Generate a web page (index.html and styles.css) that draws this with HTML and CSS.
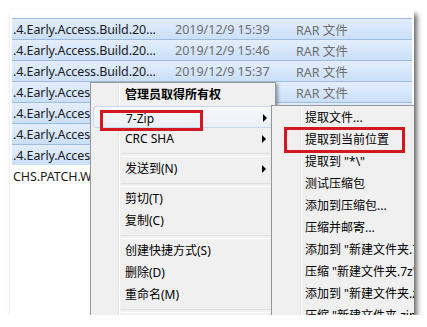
FILE: index.html
```html
<!doctype html>
<html>
<head>
    <meta charset="utf-8" />
    <title>7-Zip context menu</title>
    <link rel="stylesheet" href="styles.css">
</head>
<body>
    <div class="shot">
        <div class="list">
            <div class="row sel"><span class="name">.4.Early.Access.Build.20...</span><span class="date">2019/12/9 15:39</span><span class="type">RAR 文件</span></div>
            <div class="row sel"><span class="name">.4.Early.Access.Build.20...</span><span class="date">2019/12/9 15:46</span><span class="type">RAR 文件</span></div>
            <div class="row sel"><span class="name">.4.Early.Access.Build.20...</span><span class="date">2019/12/9 15:37</span><span class="type">RAR 文件</span></div>
            <div class="row sel"><span class="name">.4.Early.Access.Build.20...</span><span class="date">2019/12/9 15:37</span><span class="type">RAR 文件</span></div>
            <div class="row sel"><span class="name">.4.Early.Access.Build.20...</span><span class="date">2019/12/9 15:37</span><span class="type">RAR 文件</span></div>
            <div class="row sel"><span class="name">.4.Early.Access.Build.20...</span><span class="date">2019/12/9 15:37</span><span class="type">RAR 文件</span></div>
            <div class="row sel"><span class="name">.4.Early.Access.Build.20...</span><span class="date">2019/12/9 15:37</span><span class="type">RAR 文件</span></div>
            <div class="row"><span class="name">CHS.PATCH.WITH.UPDATE</span><span class="date">2019/12/9 15:30</span><span class="type">文件夹</span></div>
        </div>

        <!-- main context menu -->
        <div class="menu main">
            <div class="item bold">管理员取得所有权</div>
            <div class="item hot">7-Zip<span class="arrow"></span></div>
            <div class="item">CRC SHA<span class="arrow"></span></div>
            <div class="sep"></div>
            <div class="item">发送到(N)<span class="arrow"></span></div>
            <div class="sep"></div>
            <div class="item">剪切(T)</div>
            <div class="item">复制(C)</div>
            <div class="sep"></div>
            <div class="item">创建快捷方式(S)</div>
            <div class="item">删除(D)</div>
            <div class="item">重命名(M)</div>
            <div class="sep"></div>
        </div>

        <!-- 7-zip submenu -->
        <div class="menu sub">
            <div class="item">提取文件...</div>
            <div class="item">提取到当前位置</div>
            <div class="item">提取到 "*\"</div>
            <div class="item">测试压缩包</div>
            <div class="item">添加到压缩包...</div>
            <div class="item">压缩并邮寄...</div>
            <div class="item">添加到 "新建文件夹.7z"</div>
            <div class="item">压缩 "新建文件夹.7z" 并邮寄</div>
            <div class="item">添加到 "新建文件夹.zip"</div>
            <div class="item">压缩 "新建文件夹.zip" 并邮寄</div>
        </div>

        <div class="mark mark-zip"></div>
        <div class="mark mark-here"></div>
    </div>
</body>
</html>
```

FILE: styles.css
```css
* {
    margin: 0;
    padding: 0;
    box-sizing: border-box;
}

body {
    background: #ffffff;
    font-family: "Noto Sans", "Noto Sans CJK SC", sans-serif;
}

/* screenshot panel */
.shot {
    position: relative;
    margin: 10px 0 0 10px;
    width: 404px;
    height: 305px;
    background: #ffffff;
    overflow: hidden;
    box-shadow: 3px 4px 5px rgba(0, 0, 0, 0.6);
}

/* file list */
.list {
    padding: 8px 2px 0 2px;
}

.row {
    display: flex;
    align-items: center;
    height: 21px;
    font-size: 12.5px;
    color: #1b1b1b;
    white-space: nowrap;
    border-top: 1px solid transparent;
}

.row.sel {
    background: linear-gradient(#e3eefc, #cadff8);
    border-top: 1px solid #9fbbe0;
}

.row .name {
    width: 163px;
    padding-left: 1px;
    overflow: hidden;
    letter-spacing: -0.1px;
}

.row .date {
    width: 121px;
    color: #6e6e6e;
}

.row .type {
    color: #6e6e6e;
}

/* menus */
.menu {
    position: absolute;
    background: #f0f0f0;
    border: 1px solid #979797;
    font-size: 12px;
    color: #000;
    box-shadow: 2px 2px 3px rgba(0, 0, 0, 0.35);
}

.menu::before {
    content: "";
    position: absolute;
    top: 0;
    bottom: 0;
    border-left: 1px solid #e2e3e3;
    border-right: 1px solid #ffffff;
}

.main {
    left: 80px;
    top: 72px;
    width: 186px;
    height: 260px;
    padding-top: 1px;
}

.main::before {
    left: 27px;
}

.sub {
    left: 261px;
    top: 95px;
    width: 160px;
    height: 240px;
    padding-top: 1px;
}

.sub::before {
    left: 28px;
}

.item {
    position: relative;
    height: 22px;
    line-height: 22px;
    padding-left: 34px;
    white-space: nowrap;
}

.sub .item {
    padding-left: 33px;
}

.item.bold {
    font-weight: bold;
}

.item.hot {
    margin: 0 2px;
    padding-left: 32px;
    padding-top: 2px;
    border: 1px solid #c9d8ec;
    border-radius: 3px;
    line-height: 20px;
    background: linear-gradient(#f7f9fc, #eaeff6);
}

.arrow {
    position: absolute;
    left: 171px;
    top: 7px;
    width: 0;
    height: 0;
    border-top: 4px solid transparent;
    border-bottom: 4px solid transparent;
    border-left: 4px solid #000;
}

.item.hot .arrow {
    left: 169px;
    top: 7px;
}

.sep {
    height: 8px;
    margin-left: 30px;
    padding-top: 3px;
}

.sep::after {
    content: "";
    display: block;
    height: 2px;
    border-top: 1px solid #e0e0e0;
    border-bottom: 1px solid #ffffff;
}

/* red annotation boxes */
.mark {
    position: absolute;
    border: 3px solid #d3191f;
}

.mark-zip {
    left: 90px;
    top: 100px;
    width: 103px;
    height: 21px;
}

.mark-here {
    left: 274px;
    top: 117px;
    width: 121px;
    height: 26px;
}
```
